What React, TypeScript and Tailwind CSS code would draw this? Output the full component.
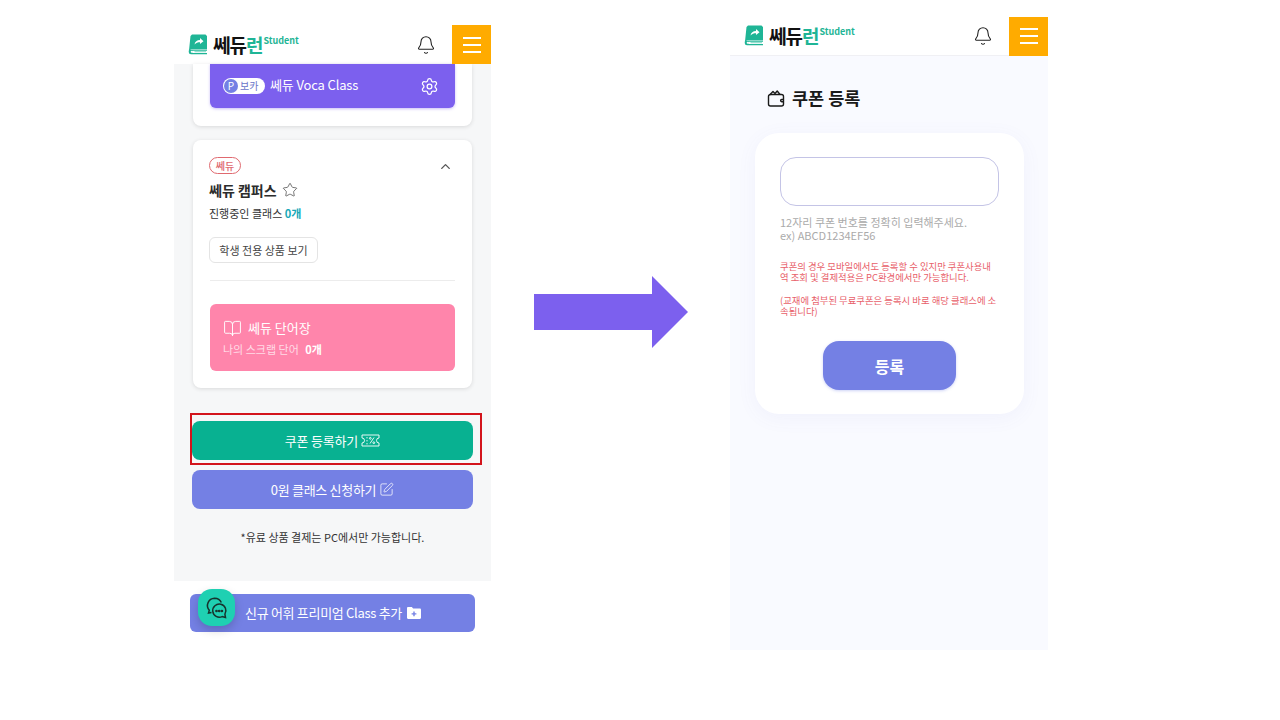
import { Bell, BookOpen, ChevronUp, Settings, SquarePen, Star } from "lucide-react";

const FONT = "font-['Noto_Sans_CJK_KR','Noto_Sans',sans-serif]";

function Logo() {
  return (
    <div className="flex items-start">
      <svg width="20" height="21" viewBox="0 0 20 21" className="mt-px">
        <path d="M4 0.5h13.5l1.5 1.5v13H3.5L1 16.5 2.5 2z" fill="#1fb596" />
        <path d="M6.500 10.500c.5-3 2.500-4.500 5.500-4.500V4l3.500 3.200L12 10V8.200c-2.200 0-4 .6-5.500 2.300z" fill="#fff" />
        <path d="M1 15.500h18v1.300H4.500a1.600 1.600 0 0 0 0 2.200H19v1.200H3A2.300 2.300 0 0 1 .7 18z" fill="#1fb596" />
        <circle cx="3.700" cy="17.800" r="1" fill="#fff" />
        <path d="M6.500 17.200H18v1H6.500z" fill="#7fd8c5" />
      </svg>
      <div className="ml-[5px] flex items-start">
        <span className="text-[19px] leading-[24px] font-bold tracking-[-1px] text-[#111]">
          쎄듀<span className="text-[#1fb596]">런</span>
        </span>
        <span className="ml-px mt-0.5 text-[9px] leading-[12px] font-bold text-[#1fb596]">Student</span>
      </div>
    </div>
  );
}

function Header({ border }: { border?: boolean }) {
  return (
    <header className={`flex h-[39px] items-center bg-white pl-3.5 ${border ? "border-b border-[#f0f0f4]" : ""}`}>
      <Logo />
      <div className="ml-auto flex items-center">
        <Bell size={20} strokeWidth={1.3} className="mr-4 text-[#222]" />
        <div className="flex h-[39px] w-[39px] flex-col items-center justify-center gap-[5px] bg-[#ffab00]">
          <span className="h-0.5 w-[18px] bg-white" />
          <span className="h-0.5 w-[18px] bg-white" />
          <span className="h-0.5 w-[18px] bg-white" />
        </div>
      </div>
    </header>
  );
}

function TicketIcon() {
  return (
    <svg width="19" height="13" viewBox="0 0 19 13" fill="none" stroke="#fff" strokeWidth="0.9">
      <path d="M1 1h17v3a2.500 2.500 0 0 0 0 5v3H1V9a2.500 2.500 0 0 0 0-5z" />
      <path d="M6 3v1.400M6 6v1.400M6 9v1.400M9 9.500l4-6" />
      <circle cx="9.300" cy="4.300" r="0.9" />
      <circle cx="12.800" cy="8.700" r="0.9" />
    </svg>
  );
}

function ChatIcon() {
  return (
    <svg width="24" height="24" viewBox="0 0 24 24" fill="none" stroke="#17332d" strokeWidth="1.5">
      <path d="M6.500 16.500 3.500 17l.8-2.700A7.300 7.300 0 0 1 9.500 2.200c3.200 0 5.800 1.800 6.800 4.400" />
      <path d="M20.500 21.500l-3.300-.9a6.600 6.600 0 1 1 2.700-2.400z" />
      <circle cx="11.500" cy="15" r="0.6" fill="#17332d" />
      <circle cx="14.200" cy="15" r="0.6" fill="#17332d" />
      <circle cx="16.900" cy="15" r="0.6" fill="#17332d" />
    </svg>
  );
}

function FolderPlusIcon() {
  return (
    <svg width="14" height="12" viewBox="0 0 14 12">
      <path d="M0 1.200C0 .5.500 0 1.200 0h3.600l1.400 1.600h6.600c.7 0 1.200.5 1.200 1.200v8c0 .7-.5 1.200-1.200 1.200H1.200C.5 12 0 11.500 0 10.800z" fill="#fff" />
      <path d="M6.300 4.500h1.400v1.700h1.700v1.400H7.700v1.700H6.300V7.600H4.600V6.200h1.700z" fill="#7480e4" />
    </svg>
  );
}

function WalletIcon() {
  return (
    <svg width="18" height="18" viewBox="0 0 18 18" fill="none" stroke="#1a1a1a" strokeWidth="1.4" strokeLinejoin="round">
      <path d="M1.500 7.500V15a2 2 0 0 0 2 2h11a2 2 0 0 0 2-2V7.500a2 2 0 0 0-2-2h-11a2 2 0 0 0-2 2z" />
      <path d="M2.500 6l3.500-3.500 2 2 2.200-2.500 2.800 3.500" />
      <path d="M16.500 10.500h-1.800a1.100 1.100 0 0 0 0 2.200h1.800" />
    </svg>
  );
}

function LeftPhone() {
  return (
    <section className="relative mt-[25px] h-[608px] w-[317px]">
      <Header />
      <div className="h-[517px] bg-[#f6f7f8] px-[19px] text-[#333]">
        <div className="h-[62px] rounded-b-lg bg-white px-[17px] shadow-[0_1px_4px_rgba(0,0,0,0.12)]">
          <div className="flex h-[44px] items-center rounded-b-md bg-[#7c60ee] pl-[13px] pr-4 text-white shadow-[0_1px_3px_rgba(124,96,238,0.4)]">
            <div className="flex h-4 w-[42px] items-center rounded-full bg-white pl-px">
              <span className="flex h-[14px] w-[14px] items-center justify-center rounded-full bg-[#7480e4] text-[10px] leading-none">P</span>
              <span className="ml-[2px] text-[10px] leading-none text-[#6a74c8]">보카</span>
            </div>
            <span className="ml-[5px] -mt-0.5 text-[13px] tracking-[-0.15px]">쎄듀 Voca Class</span>
            <Settings size={19} strokeWidth={1.6} className="ml-auto" />
          </div>
        </div>

        <div className="mt-3.5 h-[248px] rounded-lg bg-white px-[17px] pt-[17px] shadow-[0_1px_4px_rgba(0,0,0,0.12)]">
          <div className="-ml-px flex items-start justify-between">
            <span className="flex h-[17px] w-8 items-center justify-center rounded-full border border-[#e0696f] text-[10px] font-medium text-[#e0696f]">쎄듀</span>
            <ChevronUp size={15} strokeWidth={2.2} className="mr-0.5 mt-0.5 text-[#555]" />
          </div>
          <div className="-ml-px mt-1 flex h-[24px] items-center">
            <span className="text-[14px] font-bold text-[#2c2c2c]">쎄듀 캠퍼스</span>
            <Star size={16} strokeWidth={1.1} className="ml-[5px] text-[#444]" />
          </div>
          <p className="-ml-px mt-0.5 text-[11px] leading-[18px] text-[#333]">
            진행중인 클래스 <span className="font-bold text-[#17a9b8]">0개</span>
          </p>
          <div className="-ml-px mt-[15px] flex h-[26px] w-[109px] items-center justify-center rounded-md border border-[#e4e4e4] text-[11px] text-[#444]">학생 전용 상품 보기</div>
          <div className="mt-[17px] border-t border-[#ececec]" />
          <div className="mt-[23px] h-[67px] rounded-md bg-[#ff85ab] pl-[13px] pt-[13px] text-white">
            <div className="flex h-[22px] items-center">
              <BookOpen size={19} strokeWidth={1.2} />
              <span className="ml-[6px] text-[13px]">쎄듀 단어장</span>
            </div>
            <p className="mt-px text-[11px] leading-[18px] text-[#ffdbe6]">
              나의 스크랩 단어 <span className="ml-1 font-bold text-white">0개</span>
            </p>
          </div>
        </div>

        <button type="button" className="-mx-px mt-[33px] flex h-[39px] w-[281px] items-center justify-center gap-[3px] rounded-lg bg-[#08b191] text-[13px] tracking-[-0.2px] text-white">
          쿠폰 등록하기 <TicketIcon />
        </button>
        <button type="button" className="-mx-px mt-2.5 flex h-[39px] w-[281px] items-center justify-center gap-[3px] rounded-lg bg-[#7480e4] text-[13px] tracking-[-0.3px] text-white">
          0원 클래스 신청하기 <SquarePen size={15} strokeWidth={1.2} />
        </button>
        <p className="mt-[19px] text-center text-[11px] leading-[18px] text-[#333]">*유료 상품 결제는 PC에서만 가능합니다.</p>
      </div>
      <div className="pl-4 pt-[13px]">
        <button type="button" className="flex h-[38px] w-[285px] items-center justify-center gap-[5px] rounded-md bg-[#7480e4] pl-px text-[13px] tracking-[-0.3px] text-white">
          신규 어휘 프리미엄 Class 추가 <FolderPlusIcon />
        </button>
      </div>
      <div className="absolute left-4 top-[388px] h-[52px] w-[292px] border-2 border-[#d3141c]" />
      <div className="absolute left-6 top-[564px] flex h-[37px] w-[37px] items-center justify-center rounded-[14px] bg-[#1fd0b2] shadow-[0_4px_10px_rgba(0,0,0,0.18)]">
        <ChatIcon />
      </div>
    </section>
  );
}

function RightPhone() {
  return (
    <section className="mt-[17px] ml-[42px] h-[633px] w-[318px]">
      <Header border />
      <div className="h-[594px] bg-[#f9faff] px-[25px]">
        <div className="flex items-center pl-3 pt-[30px]">
          <WalletIcon />
          <h1 className="ml-[7px] text-[17.5px] leading-[24px] font-bold text-[#1a1a1a]">쿠폰 등록</h1>
        </div>
        <div className="mt-[23px] h-[281px] w-[269px] rounded-3xl bg-white px-[25px] pt-6 shadow-[0_4px_20px_rgba(100,110,200,0.06)]">
          <div className="h-[49px] rounded-2xl border border-[#c4c4e6] bg-white" />
          <p className="mt-[10px] text-[11px] leading-[13px] text-[#aaaaaa]">
            12자리 쿠폰 번호를 정확히 입력해주세요.
            <br />
            ex) ABCD1234EF56
          </p>
          <p className="mt-[19px] text-[9.4px] leading-[11px] text-[#e8606a]">쿠폰의 경우 모바일에서도 등록할 수 있지만 쿠폰사용내역 조회 및 결제적용은 PC환경에서만 가능합니다.</p>
          <p className="mt-[12px] text-[9.4px] leading-[11px] text-[#e8606a]">(교재에 첨부된 무료쿠폰은 등록시 바로 해당 클래스에 소속됩니다)</p>
          <button type="button" className="mx-auto mt-6 flex h-[49px] w-[133px] items-center justify-center rounded-2xl bg-[#7480e4] text-base font-bold text-white shadow-[0_1px_3px_rgba(116,128,228,0.35)]">등록</button>
        </div>
      </div>
    </section>
  );
}

function Arrow() {
  return (
    <svg width="154" height="72" viewBox="0 0 154 72" className="ml-[43px] mt-[276px] shrink-0">
      <path d="M0 18h118V0l36 36-36 36V54H0z" fill="#7c60ee" />
    </svg>
  );
}

export default function App() {
  return (
    <div className={`flex h-[720px] w-[1280px] items-start overflow-hidden bg-white pl-[174px] ${FONT}`}>
      <LeftPhone />
      <Arrow />
      <RightPhone />
    </div>
  );
}
